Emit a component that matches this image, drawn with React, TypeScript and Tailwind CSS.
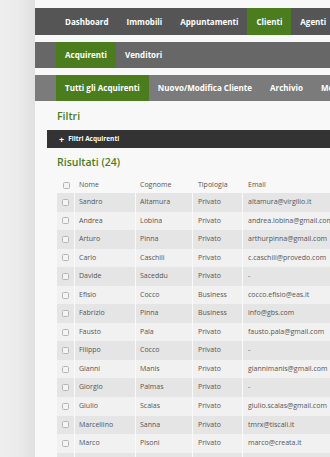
import React from "react";

const rows: [string, string, string, string][] = [
  ["Sandro", "Altamura", "Privato", "altamura@virgilio.it"],
  ["Andrea", "Lobina", "Privato", "andrea.lobina@gmail.com"],
  ["Arturo", "Pinna", "Privato", "arthurpinna@gmail.com"],
  ["Carlo", "Caschili", "Privato", "c.caschili@provedo.com"],
  ["Davide", "Saceddu", "Privato", "-"],
  ["Efisio", "Cocco", "Business", "cocco.efisio@eas.it"],
  ["Fabrizio", "Pinna", "Business", "info@gbs.com"],
  ["Fausto", "Pala", "Privato", "fausto.pala@gmail.com"],
  ["Filippo", "Cocco", "Privato", "-"],
  ["Gianni", "Manis", "Privato", "giannimanis@gmail.com"],
  ["Giorgio", "Palmas", "Privato", "-"],
  ["Giulio", "Scalas", "Privato", "giulio.scalas@gmail.com"],
  ["Marcellino", "Sanna", "Privato", "tmrx@tiscali.it"],
  ["Marco", "Pisoni", "Privato", "marco@creata.it"],
  ["Mario", "Rossi", "Privato", "-"],
];

function Box() {
  return <span className="block w-[7px] h-[7px] rounded-[1.5px] border border-[#b5b5b5] bg-[#f4f4f4]" />;
}

function NavItem({ label, active }: { label: string; active?: boolean }) {
  return (
    <div className={"h-full flex items-center px-[9px] shrink-0 " + (active ? "bg-[#4b7d1e]" : "")}>
      {label}
    </div>
  );
}

export default function App() {
  return (
    <div
      className="w-[330px] h-[457px] overflow-hidden flex bg-[#ececec]"
      style={{ fontFamily: '"Open Sans", "Liberation Sans", sans-serif' }}
    >
      <div className="w-[35px] shrink-0 bg-gradient-to-r from-[#eeeeee] via-[#ebebeb] to-[#e0e0e0]" />
      <div className="w-[295px] shrink-0 bg-[#f8f8f8] flex flex-col overflow-hidden">
        <div className="h-[8px] shrink-0" />
        <div className="h-[27px] shrink-0 bg-[#555555] flex items-center pl-[21px] text-white font-bold text-[8px] whitespace-nowrap overflow-hidden">
          <NavItem label="Dashboard" />
          <NavItem label="Immobili" />
          <NavItem label="Appuntamenti" />
          <NavItem label="Clienti" active />
          <NavItem label="Agenti" />
        </div>
        <div className="h-[7px] shrink-0" />
        <div className="h-[26px] shrink-0 bg-[#676767] flex items-center pl-[21px] text-white font-bold text-[8px] whitespace-nowrap overflow-hidden">
          <NavItem label="Acquirenti" active />
          <NavItem label="Venditori" />
        </div>
        <div className="h-[7px] shrink-0" />
        <div className="h-[26px] shrink-0 bg-[#7b7b7b] flex items-center pl-[21px] text-white font-bold text-[8px] whitespace-nowrap overflow-hidden">
          <NavItem label="Tutti gli Acquirenti" active />
          <NavItem label="Nuovo/Modifica Cliente" />
          <NavItem label="Archivio" />
          <NavItem label="Modifica" />
        </div>
        <div className="pl-[22px] pt-[7px] text-[10.5px] text-[#4b7d1e] font-semibold leading-[16px]">Filtri</div>
        <div className="ml-[12px] mt-[6px] h-[18px] shrink-0 bg-[#333333] flex items-center pl-[12px] text-white text-[6.5px] font-bold whitespace-nowrap">
          <span className="text-[9px] mr-[4px] leading-none">+</span>Filtri Acquirenti
        </div>
        <div className="pl-[22px] pt-[6px] text-[10.5px] text-[#4b7d1e] font-semibold leading-[16px]">Risultati (24)</div>
        <div className="ml-[22px] mt-[7px] w-[300px] shrink-0 text-[7px] text-[#555555] whitespace-nowrap">
          <div className="flex h-[16px] items-center">
            <div className="w-[18px] shrink-0 flex justify-center"><Box /></div>
            <div className="w-[61px] shrink-0 pl-[4px]">Nome</div>
            <div className="w-[57px] shrink-0 pl-[4px]">Cognome</div>
            <div className="w-[50px] shrink-0 pl-[5px]">Tipologia</div>
            <div className="shrink-0 pl-[5px]">Email</div>
          </div>
          {rows.map((r, i) => (
            <div
              key={i}
              className={"flex h-[18.55px] items-center " + (i % 2 === 0 ? "bg-[#e5e5e5]" : "bg-[#f1f1f1]")}
            >
              <div className="w-[18px] shrink-0 h-full flex items-center justify-center border-r border-[#fafafa]"><Box /></div>
              <div className="w-[61px] shrink-0 h-full flex items-center pl-[4px] border-r border-[#fafafa]">{r[0]}</div>
              <div className="w-[57px] shrink-0 h-full flex items-center pl-[4px] border-r border-[#fafafa]">{r[1]}</div>
              <div className="w-[50px] shrink-0 h-full flex items-center pl-[5px] border-r border-[#fafafa]">{r[2]}</div>
              <div className="flex-1 min-w-0 h-full flex items-center pl-[5px] overflow-hidden">{r[3]}</div>
            </div>
          ))}
        </div>
      </div>
    </div>
  );
}
